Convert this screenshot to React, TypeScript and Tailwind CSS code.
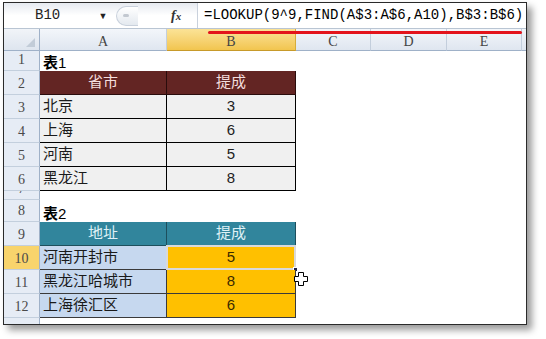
import React from "react";

const serif = { fontFamily: '"Liberation Serif", "Noto Sans CJK SC", serif' };
const mono = { fontFamily: '"Liberation Mono", "Noto Sans CJK SC", monospace' };
const cjk = { fontFamily: '"Liberation Sans", "Noto Sans CJK SC", sans-serif' };

function RowHead({ n, hl }: { n: number; hl?: boolean }) {
  return (
    <div
      className={`w-[36px] shrink-0 flex items-end justify-center pb-[1px] border-r border-b border-r-[#9fb1c8] border-b-[#c3cfdd] text-[14px] leading-none text-[#4a4a4a] overflow-hidden ${
        hl ? "bg-[#f8d46c]" : "bg-[#e6ecf5]"
      }`}
      style={serif}
    >
      <span className="mb-[2px]">{n}</span>
    </div>
  );
}

function Row({
  n,
  h,
  hl,
  children,
}: {
  n: number;
  h: string;
  hl?: boolean;
  children?: React.ReactNode;
}) {
  return (
    <div className={`flex ${h}`}>
      <RowHead n={n} hl={hl} />
      {children}
    </div>
  );
}

function T1Row({ n, name, val }: { n: number; name: string; val: string }) {
  return (
    <Row n={n} h="h-[24px]">
      <div
        className="w-[127px] bg-[#f0f0f0] border-r border-b border-black flex items-center pl-[3px] text-[15px] text-[#1a1a1a]"
        style={cjk}
      >
        {name}
      </div>
      <div
        className="w-[129px] bg-[#f0f0f0] border-r border-b border-black flex items-center justify-center text-[15px] text-[#222]"
        style={cjk}
      >
        {val}
      </div>
    </Row>
  );
}

function T2Row({
  n,
  name,
  val,
  sel,
}: {
  n: number;
  name: string;
  val: string;
  sel?: boolean;
}) {
  return (
    <Row n={n} h="h-[24px]" hl={sel}>
      <div
        className="w-[127px] bg-[#c6d8ef] border-r border-b border-[#3a3a3a] flex items-center pl-[3px] text-[15px] text-[#1a1a1a]"
        style={cjk}
      >
        {name}
      </div>
      <div
        className="relative w-[129px] bg-[#ffc000] border-r border-b border-[#3a3a3a] flex items-center justify-center text-[15px] text-[#3a2a00]"
        style={cjk}
      >
        {val}
        {sel && (
          <>
            <div className="absolute -left-[1px] -top-[1px] -right-[1px] -bottom-[1px] border-2 border-[#d9d9d9]" />
            <div className="absolute -right-[3px] -bottom-[3px] w-[5px] h-[5px] bg-[#202040] border border-white" />
          </>
        )}
      </div>
    </Row>
  );
}

export default function App() {
  const cols = [
    { l: "A", w: "w-[127px]" },
    { l: "B", w: "w-[129px]", hl: true },
    { l: "C", w: "w-[75px]" },
    { l: "D", w: "w-[76px]" },
    { l: "E", w: "w-[75px]" },
  ];
  return (
    <div className="relative w-[546px] h-[339px] bg-white pt-[2px] pl-[3px] overflow-hidden">
      <div className="w-[524px] h-[323px] border border-[#2a2a2a] bg-white flex flex-col overflow-hidden shadow-[5px_5px_7px_rgba(0,0,0,0.4)]">
        {/* formula bar */}
        <div className="h-[26px] shrink-0 flex items-center bg-gradient-to-b from-[#e6eaf0] via-white to-white border-b border-[#b9c5d3]">
          <div className="w-[92px] h-full flex items-center pl-[31px] text-[14px] text-[#222]" style={mono}>
            B10
          </div>
          <div className="w-[14px] flex justify-center text-[9px] text-[#222]">▼</div>
          <div className="ml-[6px] w-[22px] h-[20px] rounded-l-full border border-[#c9d1dc] border-r-0 bg-gradient-to-b from-white to-[#e4e9ef] flex items-center pl-[6px]">
            <div className="w-[6px] h-[3px] rounded-full bg-[#c2c8d0]" />
          </div>
          <div className="flex-1 h-full" />
          <div
            className="w-[20px] text-[14px] italic font-bold text-[#333] mr-[6px] leading-none"
            style={serif}
          >
            f<span className="text-[11px]">x</span>
          </div>
          <div className="w-[329px] h-full border-l border-[#c9d1dc] bg-white flex items-center pl-[6px] text-[14px] text-black whitespace-nowrap" style={mono}>
            =LOOKUP(9^9,FIND(A$3:A$6,A10),B$3:B$6)
          </div>
        </div>

        {/* column headers */}
        <div className="h-[22px] shrink-0 flex">
          <div className="w-[36px] bg-gradient-to-b from-[#f1f4f8] to-[#dee5ef] border-r border-b border-[#9fb1c8] relative">
            <div className="absolute right-[4px] bottom-[3px] w-0 h-0 border-l-[9px] border-l-transparent border-b-[9px] border-b-[#c2ccd8]" />
          </div>
          {cols.map((c) => (
            <div
              key={c.l}
              className={`${c.w} shrink-0 border-r border-b flex items-center justify-center pt-[3px] text-[14px] text-[#444] ${
                c.hl
                  ? "bg-gradient-to-b from-[#fbe396] to-[#f2c54e] border-r-[#d6ad3a] border-b-[#c79a2a]"
                  : "bg-gradient-to-b from-[#f3f6fa] to-[#dfe6f0] border-r-[#c3cedc] border-b-[#9fb1c8]"
              }`}
              style={serif}
            >
              {c.l}
            </div>
          ))}
          <div className="flex-1 bg-gradient-to-b from-[#f3f6fa] to-[#dfe6f0] border-b border-[#9fb1c8]" />
        </div>

        {/* rows */}
        <Row n={1} h="h-[20px]">
          <div className="w-[256px] flex items-end pl-[3px] pb-[1px] text-[15px] leading-none text-black" style={cjk}>
            <span className="font-bold">表</span>1
          </div>
        </Row>
        <Row n={2} h="h-[24px]">
          <div
            className="w-[127px] bg-[#632523] border-r border-b border-[#2a0c0c] flex items-center justify-center text-[15px] text-[#f4dede]"
            style={cjk}
          >
            省市
          </div>
          <div
            className="w-[129px] bg-[#632523] border-r border-b border-[#2a0c0c] flex items-center justify-center text-[15px] text-[#f4dede]"
            style={cjk}
          >
            提成
          </div>
        </Row>
        <T1Row n={3} name="北京" val="3" />
        <T1Row n={4} name="上海" val="6" />
        <T1Row n={5} name="河南" val="5" />
        <T1Row n={6} name="黑龙江" val="8" />
        <Row n={7} h="h-[9px]" />
        <Row n={8} h="h-[22px]">
          <div className="w-[256px] flex items-end pl-[3px] pb-[1px] text-[15px] leading-none text-black" style={cjk}>
            <span className="font-bold">表</span>2
          </div>
        </Row>
        <Row n={9} h="h-[24px]">
          <div
            className="w-[127px] bg-[#31859c] border-r border-b border-[#1d4f5d] flex items-center justify-center text-[15px] text-[#dff1f6]"
            style={cjk}
          >
            地址
          </div>
          <div
            className="w-[129px] bg-[#31859c] border-r border-b border-[#1d4f5d] flex items-center justify-center text-[15px] text-[#dff1f6]"
            style={cjk}
          >
            提成
          </div>
        </Row>
        <T2Row n={10} name="河南开封市" val="5" sel />
        <T2Row n={11} name="黑龙江哈城市" val="8" />
        <T2Row n={12} name="上海徐汇区" val="6" />
        <div className="flex flex-1">
          <div className="w-[36px] bg-[#e6ecf5] border-r border-[#9fb1c8]" />
        </div>
      </div>

      {/* red annotation line */}
      <div className="absolute left-[208px] top-[31px] w-[314px] h-[3px] bg-[#e3141c] rounded-full" />

      {/* cell cursor */}
      <svg className="absolute left-[293px] top-[271px]" width="16" height="16" viewBox="0 0 16 16">
        <path
          d="M5.5 1.5h5v4h4v5h-4v4h-5v-4h-4v-5h4z"
          fill="white"
          stroke="black"
          strokeWidth="1"
        />
      </svg>
    </div>
  );
}
